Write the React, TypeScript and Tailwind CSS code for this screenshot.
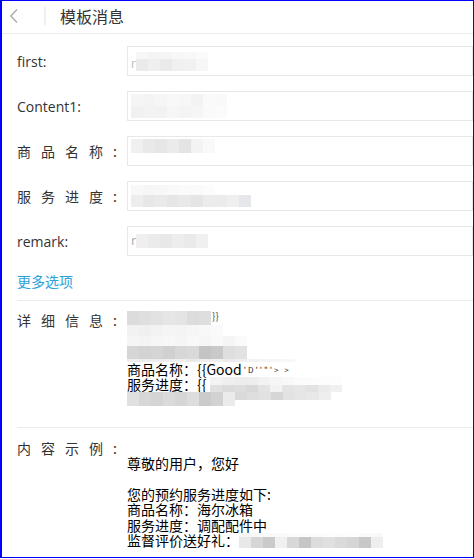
import React from "react";

const FONT = { fontFamily: '"Open Sans", "Noto Sans CJK SC", sans-serif' };
const CJK = { fontFamily: '"Noto Sans CJK SC", sans-serif' };

function Cells({ colors, h, w }: { colors: string[]; h: string; w?: string }) {
  return (
    <div className="flex">
      {colors.map((c, i) => (
        <div key={i} className={`${w ?? "w-[12px]"} ${h} ${c}`} />
      ))}
    </div>
  );
}

function Field({ label, cjk, children }: { label: string; cjk?: boolean; children?: React.ReactNode }) {
  return (
    <div className="flex items-center h-[30px]">
      <div className="w-[125px] shrink-0 pl-[15px] text-[14px] text-[#333] whitespace-nowrap" style={cjk ? CJK : FONT}>
        {cjk ? (
          <>
            <span className="tracking-[10px]">{label}</span>
            <span>:</span>
          </>
        ) : (
          label
        )}
      </div>
      <div className="flex-1 h-[30px] border border-[#e8e8e8] flex items-center pl-[3px] overflow-hidden">
        {children}
      </div>
    </div>
  );
}

export default function App() {
  return (
    <div className="w-[474px] h-[558px] border border-l-2 border-[#0000ff] bg-white overflow-hidden" style={FONT}>
      {/* header */}
      <div className="h-[33px] flex items-center border-b border-[#ebebeb] pb-[3px]">
        <div className="w-[42px] flex items-center pl-[7px]">
          <svg width="10" height="16" viewBox="0 0 10 16">
            <path d="M8 1.5 L1.8 8 L8 14.5" fill="none" stroke="#a8a8a8" strokeWidth="1.3" />
          </svg>
        </div>
        <div className="w-[2px] h-[18px] bg-[#efefef]" />
        <div className="ml-[14px] text-[16px] text-[#333] leading-[20px]" style={CJK}>
          模板消息
        </div>
      </div>

      {/* form */}
      <div className="pt-[12px] flex flex-col gap-[15px]">
        <Field label="first:">
          <span className="text-[12px] text-[#bbb] mt-[6px]">r</span>
          <div className="flex flex-col">
            <Cells h="h-[7px]" colors={["bg-[#f6f6f6]", "bg-[#f4f4f4]", "bg-[#f5f5f5]", "bg-[#f7f7f7]", "bg-[#f8f8f8]", "bg-[#fafafa]"]} />
            <Cells h="h-[12px]" colors={["bg-[#eaeaea]", "bg-[#efefef]", "bg-[#eaeaea]", "bg-[#f0f0f0]", "bg-[#f1f1f1]", "bg-[#f7f7f7]"]} />
          </div>
        </Field>
        <Field label="Content1:">
          <div className="flex flex-col">
            <Cells h="h-[12px]" colors={["bg-[#f5f5f5]", "bg-[#f4f4f4]", "bg-[#f6f6f6]", "bg-[#f8f8f8]", "bg-[#f7f7f7]", "bg-[#f3f3f3]", "bg-[#fafafa]", "bg-[#f9f9f9]"]} />
            <Cells h="h-[12px]" colors={["bg-[#f1f1f1]", "bg-[#f3f3f3]", "bg-[#f2f2f2]", "bg-[#f5f6f8]", "bg-[#f4f4f4]", "bg-[#f6f6f6]", "bg-[#fafafa]", "bg-[#fbfbfb]"]} />
          </div>
        </Field>
        <Field label="商品名称" cjk>
          <div className="flex flex-col -mt-[10px]">
            <Cells h="h-[14px]" colors={["bg-[#f0f0f0]", "bg-[#e9e9e9]", "bg-[#e6e6e6]", "bg-[#ebebeb]", "bg-[#e4e4e4]", "bg-[#f3f3f3]", "bg-[#f8f9fb]"]} />
          </div>
        </Field>
        <Field label="服务进度" cjk>
          <div className="flex flex-col">
            <Cells h="h-[10px]" colors={["bg-[#f8f8f8]", "bg-[#f6f6f6]", "bg-[#f7f7f7]", "bg-[#f9f9f9]", "bg-[#fbfbfb]", "bg-[#fafafa]", "bg-[#fcfcfc]"]} />
            <Cells h="h-[12px]" colors={["bg-[#ededed]", "bg-[#e7e7e7]", "bg-[#eaeaea]", "bg-[#e6e6e6]", "bg-[#e9e9e9]", "bg-[#e5e5e5]", "bg-[#ececec]", "bg-[#ebebeb]", "bg-[#efefef]", "bg-[#e6e7ea]"]} />
          </div>
        </Field>
        <Field label="remark:">
          <span className="text-[13px] text-[#aaa]">r</span>
          <Cells h="h-[14px]" colors={["bg-[#efefef]", "bg-[#ebebeb]", "bg-[#e8e8e8]", "bg-[#ededed]", "bg-[#eaeaea]", "bg-[#f0f0f0]"]} />
        </Field>
      </div>

      <div className="mt-[15px] pl-[15px] text-[14px] leading-[20px] text-[#2c9fdd]" style={CJK}>
        更多选项
      </div>
      <div className="mt-[9px] ml-[15px] h-px bg-[#ececec]" />

      {/* details */}
      <div className="flex pt-[10px] pb-[21px]">
        <div className="w-[125px] shrink-0 pl-[15px] text-[14px] leading-[18px] text-[#333] whitespace-nowrap" style={CJK}>
          <span className="tracking-[10px]">详细信息</span>
          <span>:</span>
        </div>
        <div className="flex flex-col text-[14px] leading-[15px] text-black" style={CJK}>
          <div className="flex items-start h-[14px]">
            <Cells h="h-[14px]" colors={["bg-[#dcdcdc]", "bg-[#dfdfdf]", "bg-[#e2e2e2]", "bg-[#e6e6e6]", "bg-[#e4e4e4]", "bg-[#dcdcdc]", "bg-[#dedede]"]} />
            <span className="text-[10px] leading-[10px] text-[#555] ml-[1px]">{"}}"}</span>
          </div>
          <Cells h="h-[11px]" colors={["bg-[#f2f2f2]", "bg-[#f0f0f0]", "bg-[#f3f3f3]", "bg-[#f5f5f5]", "bg-[#f4f4f4]", "bg-[#f6f6f6]", "bg-[#f8f8f8]", "bg-[#fafafa]"]} />
          <Cells h="h-[10px]" colors={["bg-[#f5f5f5]", "bg-[#f4f4f4]", "bg-[#f6f6f6]", "bg-[#f7f7f7]", "bg-[#f5f5f5]", "bg-[#f8f8f8]", "bg-[#f6f6f6]", "bg-[#f9f9f9]", "bg-[#f5f5f5]", "bg-[#fafafa]"]} />
          <Cells h="h-[13px]" colors={["bg-[#d6d6d6]", "bg-[#d3d3d3]", "bg-[#d5d5d5]", "bg-[#d0d0d0]", "bg-[#d7d7d7]", "bg-[#d9d9d9]", "bg-[#c4c4c4]", "bg-[#c9c9c9]", "bg-[#dedede]", "bg-[#e2e2e2]"]} />
          <Cells h="h-[3px]" colors={["bg-[#eeeeee]", "bg-[#ededed]", "bg-[#ececec]", "bg-[#eeeeee]", "bg-[#efefef]", "bg-[#eaeaea]", "bg-[#eeeeee]", "bg-[#f0f0f0]", "bg-[#ebebeb]", "bg-[#eeeeee]", "bg-[#f2f2f2]", "bg-[#f4f4f4]", "bg-[#f6f6f6]", "bg-[#f8f8f8]"]} />
          <div className="flex items-center h-[15px] whitespace-nowrap">
            <span>商品名称：{"{{"}Good</span>
            <span className="text-[8px] leading-[8px] tracking-[2px] ml-[2px] text-[#222]">{"'D''\"'> >"}</span>
          </div>
          <div className="flex items-center h-[15px] whitespace-nowrap">
            <span>服务进度：{"{{"}</span>
            <div className="ml-[4px] flex flex-col">
              <Cells h="h-[8px]" colors={["bg-[#f3f3f3]", "bg-[#efefef]", "bg-[#ededed]", "bg-[#eeeeee]", "bg-[#f2f2f2]", "bg-[#f6f6f6]", "bg-[#f8f8f8]", "bg-[#fbfbfb]", "bg-[#fcfcfc]", "bg-[#fdfdfd]", "bg-[#fdfdfd]"]} />
              <Cells h="h-[7px]" colors={["bg-[#e0e0e0]", "bg-[#dbdbdb]", "bg-[#dddddd]", "bg-[#d8d8d8]", "bg-[#e3e3e3]", "bg-[#f3f3f3]", "bg-[#e4e4e4]", "bg-[#e6e6e6]", "bg-[#e2e2e2]", "bg-[#ebebeb]", "bg-[#f0f0f0]"]} />
            </div>
          </div>
          <div className="flex items-start h-[14px]">
            <Cells h="h-[14px]" colors={["bg-[#e0e0e0]", "bg-[#d7d7d7]", "bg-[#d4d4d4]", "bg-[#dadada]", "bg-[#d6d6d6]", "bg-[#dddddd]", "bg-[#cbcbcb]", "bg-[#d2d2d2]", "bg-[#ebebeb]"]} />
            <Cells h="h-[8px]" colors={["bg-[#d9d9d9]", "bg-[#dedede]", "bg-[#e1e1e1]", "bg-[#d6d6d6]", "bg-[#e3e3e3]", "bg-[#e6e6e6]", "bg-[#e8e8e8]", "bg-[#eeeeee]"]} />
          </div>
        </div>
      </div>
      <div className="ml-[15px] h-px bg-[#ececec]" />

      {/* example */}
      <div className="flex pt-[10px]">
        <div className="w-[125px] shrink-0 pl-[15px] text-[14px] leading-[20px] text-[#333] whitespace-nowrap" style={CJK}>
          <span className="tracking-[10px]">内容示例</span>
          <span>:</span>
        </div>
        <div className="mt-[2px] flex flex-col text-[14px] leading-[15.5px] text-black whitespace-nowrap" style={CJK}>
          <div className="h-[15.5px]" />
          <div>尊敬的用户，您好</div>
          <div className="h-[15.5px]" />
          <div>您的预约服务进度如下:</div>
          <div>商品名称：海尔冰箱</div>
          <div>服务进度：调配配件中</div>
          <div className="flex items-center">
            <span>监督评价送好礼：</span>
            <div className="flex flex-col">
              <Cells h="h-[4px]" colors={["bg-[#f6f6f6]", "bg-[#f8f8f8]", "bg-[#fafafa]", "bg-[#f9f9f9]", "bg-[#fbfbfb]", "bg-[#fcfcfc]", "bg-[#fbfbfb]", "bg-[#fdfdfd]", "bg-[#fcfcfc]", "bg-[#fdfdfd]", "bg-[#fafafa]", "bg-[#f8f8f8]"]} />
              <Cells h="h-[11px]" colors={["bg-[#e8e8e8]", "bg-[#d6d6d6]", "bg-[#cacaca]", "bg-[#f0f0f0]", "bg-[#d8d8d8]", "bg-[#c6c6c6]", "bg-[#dcdcdc]", "bg-[#e0e0e0]", "bg-[#dadada]", "bg-[#d5d5d5]", "bg-[#c8c8c8]", "bg-[#eeeeee]"]} />
            </div>
          </div>
        </div>
      </div>
    </div>
  );
}
